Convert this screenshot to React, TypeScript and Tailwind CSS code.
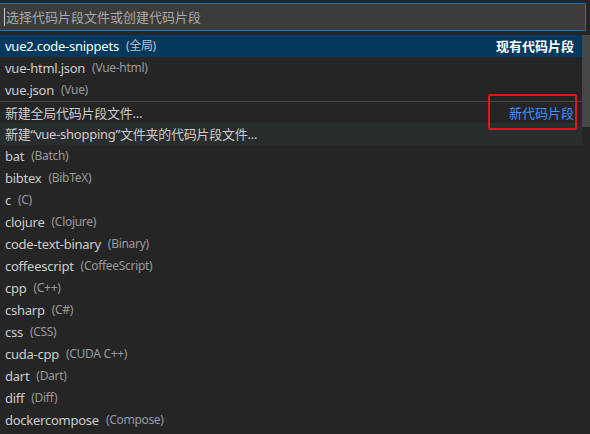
import React from "react";

// Строка списка фрагментов
type Item = {
  label: string;
  desc?: string;
  right?: React.ReactNode;
  selected?: boolean;
  hover?: boolean;
  separator?: boolean;
};

const items: Item[] = [
  { label: "vue2.code-snippets", desc: "(全局)", selected: true, right: <span className="font-semibold text-[#ffffff]">现有代码片段</span> },
  { label: "vue-html.json", desc: "(Vue-html)" },
  { label: "vue.json", desc: "(Vue)" },
  {
    label: "新建全局代码片段文件...",
    separator: true,
    right: (
      <span className="relative text-[#3794ff]">
        新代码片段
        <span className="absolute -left-[21px] -right-[3px] -top-[8px] -bottom-[6px] rounded-[2px] border-2 border-[#e3141c]" />
      </span>
    ),
  },
  { label: "新建“vue-shopping”文件夹的代码片段文件...", hover: true },
  { label: "bat", desc: "(Batch)" },
  { label: "bibtex", desc: "(BibTeX)" },
  { label: "c", desc: "(C)" },
  { label: "clojure", desc: "(Clojure)" },
  { label: "code-text-binary", desc: "(Binary)" },
  { label: "coffeescript", desc: "(CoffeeScript)" },
  { label: "cpp", desc: "(C++)" },
  { label: "csharp", desc: "(C#)" },
  { label: "css", desc: "(CSS)" },
  { label: "cuda-cpp", desc: "(CUDA C++)" },
  { label: "dart", desc: "(Dart)" },
  { label: "diff", desc: "(Diff)" },
  { label: "dockercompose", desc: "(Compose)" },
];

const Row = ({ item }: { item: Item }) => (
  <div
    className={`flex h-[22px] items-center pl-[5px] pr-[8px] ${
      item.selected ? "bg-[#04395e] text-[#ffffff]" : item.hover ? "bg-[#2a2d2e] text-[#cccccc]" : "text-[#cccccc]"
    } ${item.separator ? "border-t border-[#454545]" : ""}`}
  >
    <span className="whitespace-nowrap tracking-[-0.25px]">{item.label}</span>
    {item.desc && (
      <span
        className={`ml-[7px] whitespace-nowrap text-[12px] tracking-[-0.3px] ${
          item.selected ? "text-[#b6c4ce]" : "text-[#9a9a9a]"
        }`}
      >
        {item.desc}
      </span>
    )}
    <span className="flex-1" />
    {item.right}
  </div>
);

export default function App() {
  return (
    <div
      className="h-[434px] w-[590px] overflow-hidden bg-[#252526] pt-[3px] text-[13px] leading-[22px]"
      style={{ fontFamily: '"Segoe UI", "Noto Sans", "Noto Sans CJK SC", sans-serif' }}
    >
      {/* Поле ввода */}
      <div className="mr-[4px] flex h-[28px] items-center border border-l-0 border-[#007acc] bg-[#3c3c3c] pl-[4px]">
        <span className="h-[18px] w-px bg-[#cccccc]" />
        <span className="pl-px text-[#a8a8a8]">选择代码片段文件或创建代码片段</span>
      </div>

      {/* Список */}
      <div className="relative mt-[4px]">
        <div className="mr-[8px]">
          {items.map((it, i) => (
            <Row key={i} item={it} />
          ))}
        </div>
        <div className="absolute right-0 top-0 h-[92px] w-[8px] bg-[rgba(121,121,121,0.4)]" />
      </div>
    </div>
  );
}
